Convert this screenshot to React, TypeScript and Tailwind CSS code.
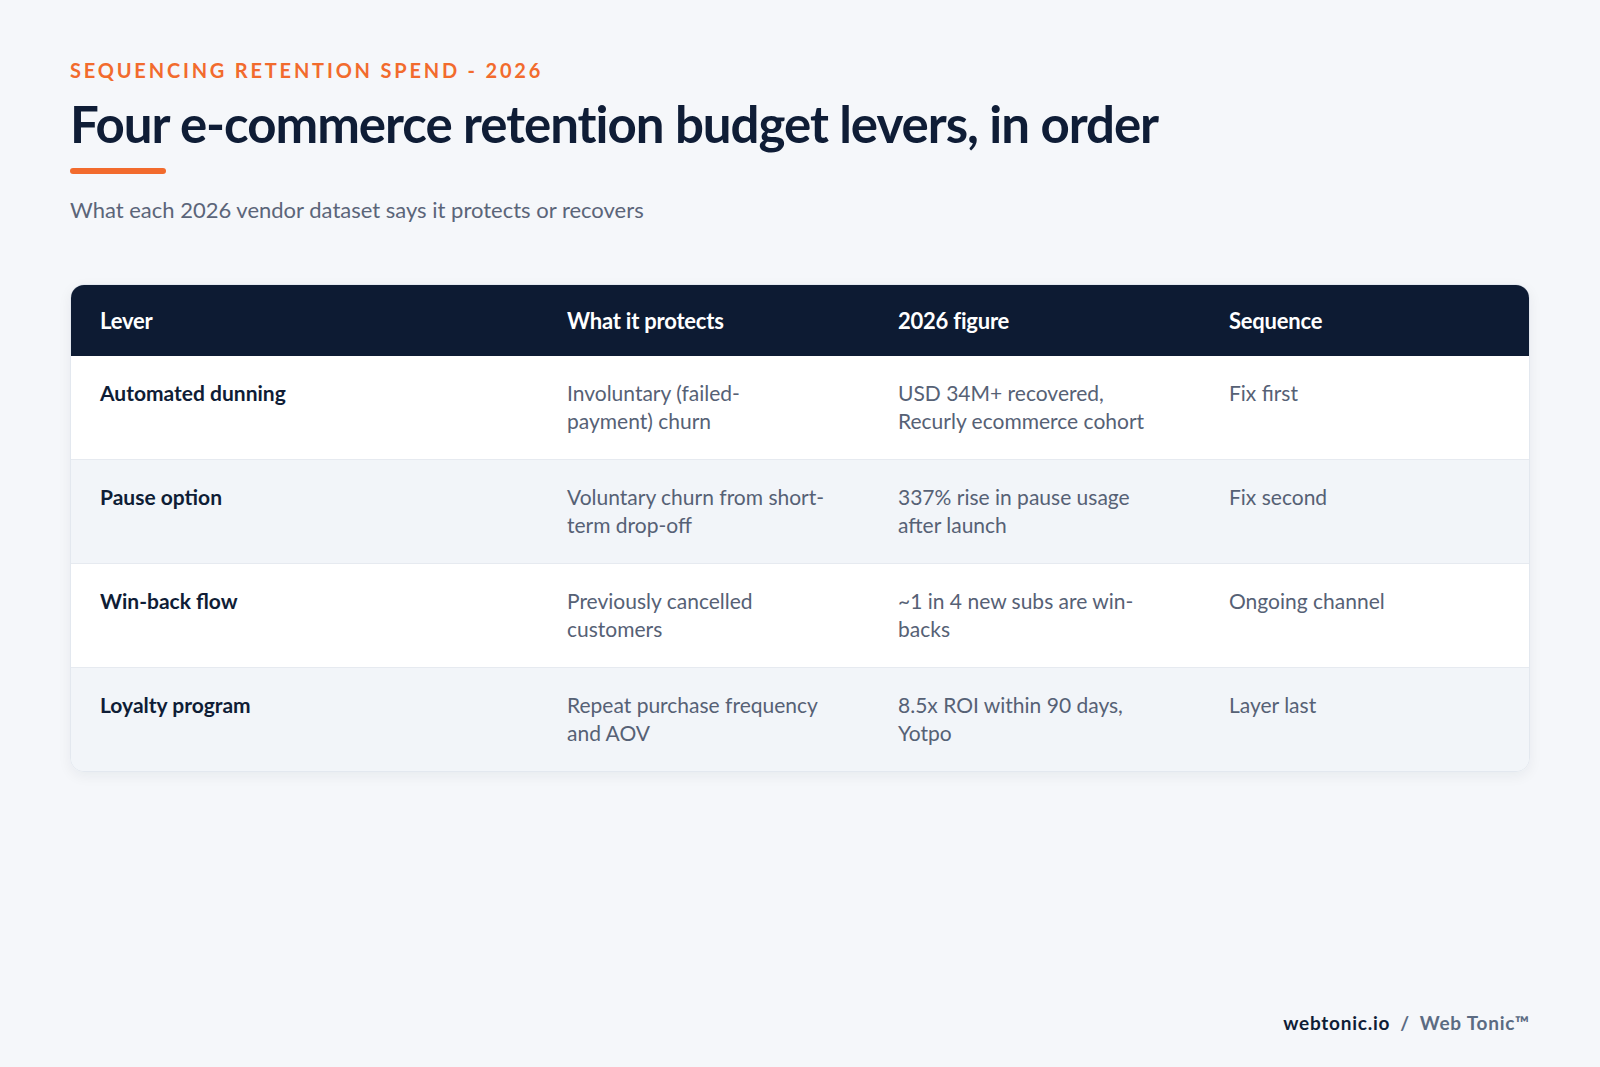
import React from "react";

const rows = [
  {
    lever: "Automated dunning",
    protects: ["Involuntary (failed-", "payment) churn"],
    figure: ["USD 34M+ recovered,", "Recurly ecommerce cohort"],
    seq: "Fix first",
    bg: "bg-white",
  },
  {
    lever: "Pause option",
    protects: ["Voluntary churn from short-", "term drop-off"],
    figure: ["337% rise in pause usage", "after launch"],
    seq: "Fix second",
    bg: "bg-[#f2f5f9]",
  },
  {
    lever: "Win-back flow",
    protects: ["Previously cancelled", "customers"],
    figure: ["~1 in 4 new subs are win-", "backs"],
    seq: "Ongoing channel",
    bg: "bg-white",
  },
  {
    lever: "Loyalty program",
    protects: ["Repeat purchase frequency", "and AOV"],
    figure: ["8.5x ROI within 90 days,", "Yotpo"],
    seq: "Layer last",
    bg: "bg-[#f2f5f9]",
  },
];

function Lines({ lines }: { lines: string[] }) {
  return (
    <>
      {lines.map((l, i) => (
        <span key={i} className="block whitespace-nowrap">
          {l}
        </span>
      ))}
    </>
  );
}

export default function App() {
  return (
    <div
      className="w-[1600px] h-[1067px] bg-[#f5f7fa] flex flex-col px-[70px] pt-[58px] pb-[30px]"
      style={{ fontFamily: "Lato, 'Noto Sans', sans-serif" }}
    >
      <div className="text-[20px] leading-[24px] font-bold tracking-[0.14em] text-[#f26b2d]">
        SEQUENCING RETENTION SPEND - 2026
      </div>
      <h1 className="mt-[14px] text-[51px] leading-[56px] font-bold tracking-[-0.02em] text-[#0f1d36]">
        Four e-commerce retention budget levers, in order
      </h1>
      <div className="mt-[16px] w-[96px] h-[6px] rounded-full bg-[#f26b2d]" />
      <p className="mt-[22px] text-[22px] leading-[28px] text-[#5b6579]">
        What each 2026 vendor dataset says it protects or recovers
      </p>

      <div className="mt-[60px] w-[1460px] rounded-[14px] overflow-hidden border border-[#e3e8ef] shadow-[0_4px_14px_rgba(15,29,54,0.06)]">
        <div className="grid grid-cols-[496px_331px_331px_1fr] bg-[#0d1b33] h-[71px] items-center text-white text-[22px] font-bold tracking-[-0.01em]">
          <div className="pl-[29px]">Lever</div>
          <div className="pl-0">What it protects</div>
          <div>2026 figure</div>
          <div>Sequence</div>
        </div>
        {rows.map((r, i) => (
          <div
            key={i}
            className={`grid grid-cols-[496px_331px_331px_1fr] ${r.bg} ${
              i > 0 ? "border-t border-[#e6eaf0]" : ""
            } pt-[23px] pb-[24px] text-[21px] leading-[28px]`}
          >
            <div className="pl-[29px] font-bold text-[#0f1d36]">{r.lever}</div>
            <div className="text-[#566175]">
              <Lines lines={r.protects} />
            </div>
            <div className="text-[#566175]">
              <Lines lines={r.figure} />
            </div>
            <div className="text-[#566175]">{r.seq}</div>
          </div>
        ))}
      </div>

      <div className="mt-auto self-end pr-0 text-[19px] font-bold tracking-[0.04em] flex items-center gap-[10px]">
        <span className="text-[#0f1d36]">webtonic.io</span>
        <span className="text-[#5b6b82]">/</span>
        <span className="text-[#5b6b82]">Web Tonic™</span>
      </div>
    </div>
  );
}
